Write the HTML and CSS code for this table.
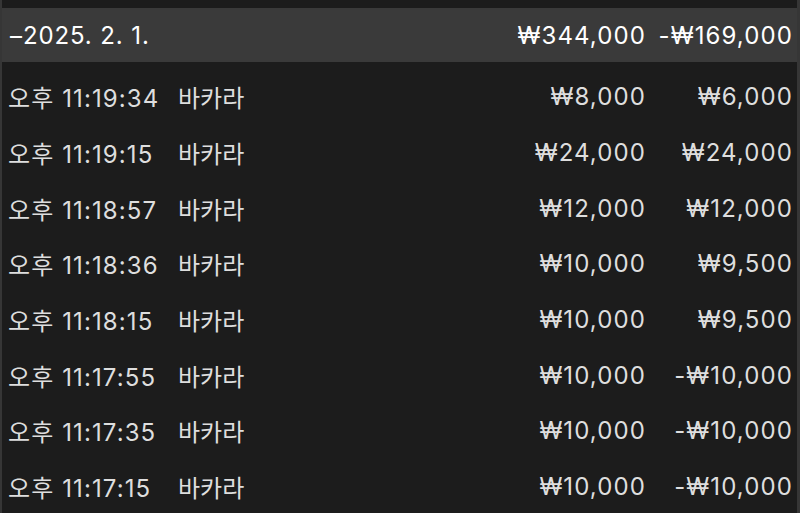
FILE: index.html
```html
<!DOCTYPE html>
<html lang="ko">
<head>
    <meta charset="UTF-8">
    <meta name="viewport" content="width=device-width, initial-scale=1.0">
    <title>게임 기록</title>
    <link rel="stylesheet" href="styles.css">
</head>
<body>
    <div id="history">
        <div class="day-row">
            <span class="day-date">–2025. 2. 1.</span>
            <span class="amount">₩344,000</span>
            <span class="result">-₩169,000</span>
        </div>
        <div class="bet-row">
            <span class="time">오후 11:19:34</span>
            <span class="game">바카라</span>
            <span class="amount">₩8,000</span>
            <span class="result">₩6,000</span>
        </div>
        <div class="bet-row">
            <span class="time">오후 11:19:15</span>
            <span class="game">바카라</span>
            <span class="amount">₩24,000</span>
            <span class="result">₩24,000</span>
        </div>
        <div class="bet-row">
            <span class="time">오후 11:18:57</span>
            <span class="game">바카라</span>
            <span class="amount">₩12,000</span>
            <span class="result">₩12,000</span>
        </div>
        <div class="bet-row">
            <span class="time">오후 11:18:36</span>
            <span class="game">바카라</span>
            <span class="amount">₩10,000</span>
            <span class="result">₩9,500</span>
        </div>
        <div class="bet-row">
            <span class="time">오후 11:18:15</span>
            <span class="game">바카라</span>
            <span class="amount">₩10,000</span>
            <span class="result">₩9,500</span>
        </div>
        <div class="bet-row">
            <span class="time">오후 11:17:55</span>
            <span class="game">바카라</span>
            <span class="amount">₩10,000</span>
            <span class="result">-₩10,000</span>
        </div>
        <div class="bet-row">
            <span class="time">오후 11:17:35</span>
            <span class="game">바카라</span>
            <span class="amount">₩10,000</span>
            <span class="result">-₩10,000</span>
        </div>
        <div class="bet-row">
            <span class="time">오후 11:17:15</span>
            <span class="game">바카라</span>
            <span class="amount">₩10,000</span>
            <span class="result">-₩10,000</span>
        </div>
    </div>
</body>
</html>
```

FILE: styles.css
```css
body {
    background-color: #1c1c1c;
    color: #dedede;
    font-family: Inter, "Noto Sans CJK KR", sans-serif;
    font-size: 24px;
    margin: 0;
    height: 513px;
    overflow: hidden;
}

#history {
    border-left: 2px solid #363636;
    border-right: 3px solid #363636;
    padding-top: 8px;
    height: 100%;
    box-sizing: border-box;
}

.day-row,
.bet-row {
    display: grid;
    grid-template-columns: 170px 1fr 132px 147px;
    align-items: center;
    padding: 0 4px 0 6px;
    letter-spacing: 1.1px;
}

.day-row {
    background-color: #3a3a3a;
    color: #fff;
    height: 54px;
    margin-bottom: 7px;
}

.day-date {
    grid-column: 1 / 3;
    padding-left: 2px;
    letter-spacing: 0.9px;
}

.bet-row {
    height: 55.7px;
}

.time {
    white-space: nowrap;
}

.game {
    letter-spacing: 0;
}

.amount,
.result {
    text-align: right;
    white-space: nowrap;
}
```
